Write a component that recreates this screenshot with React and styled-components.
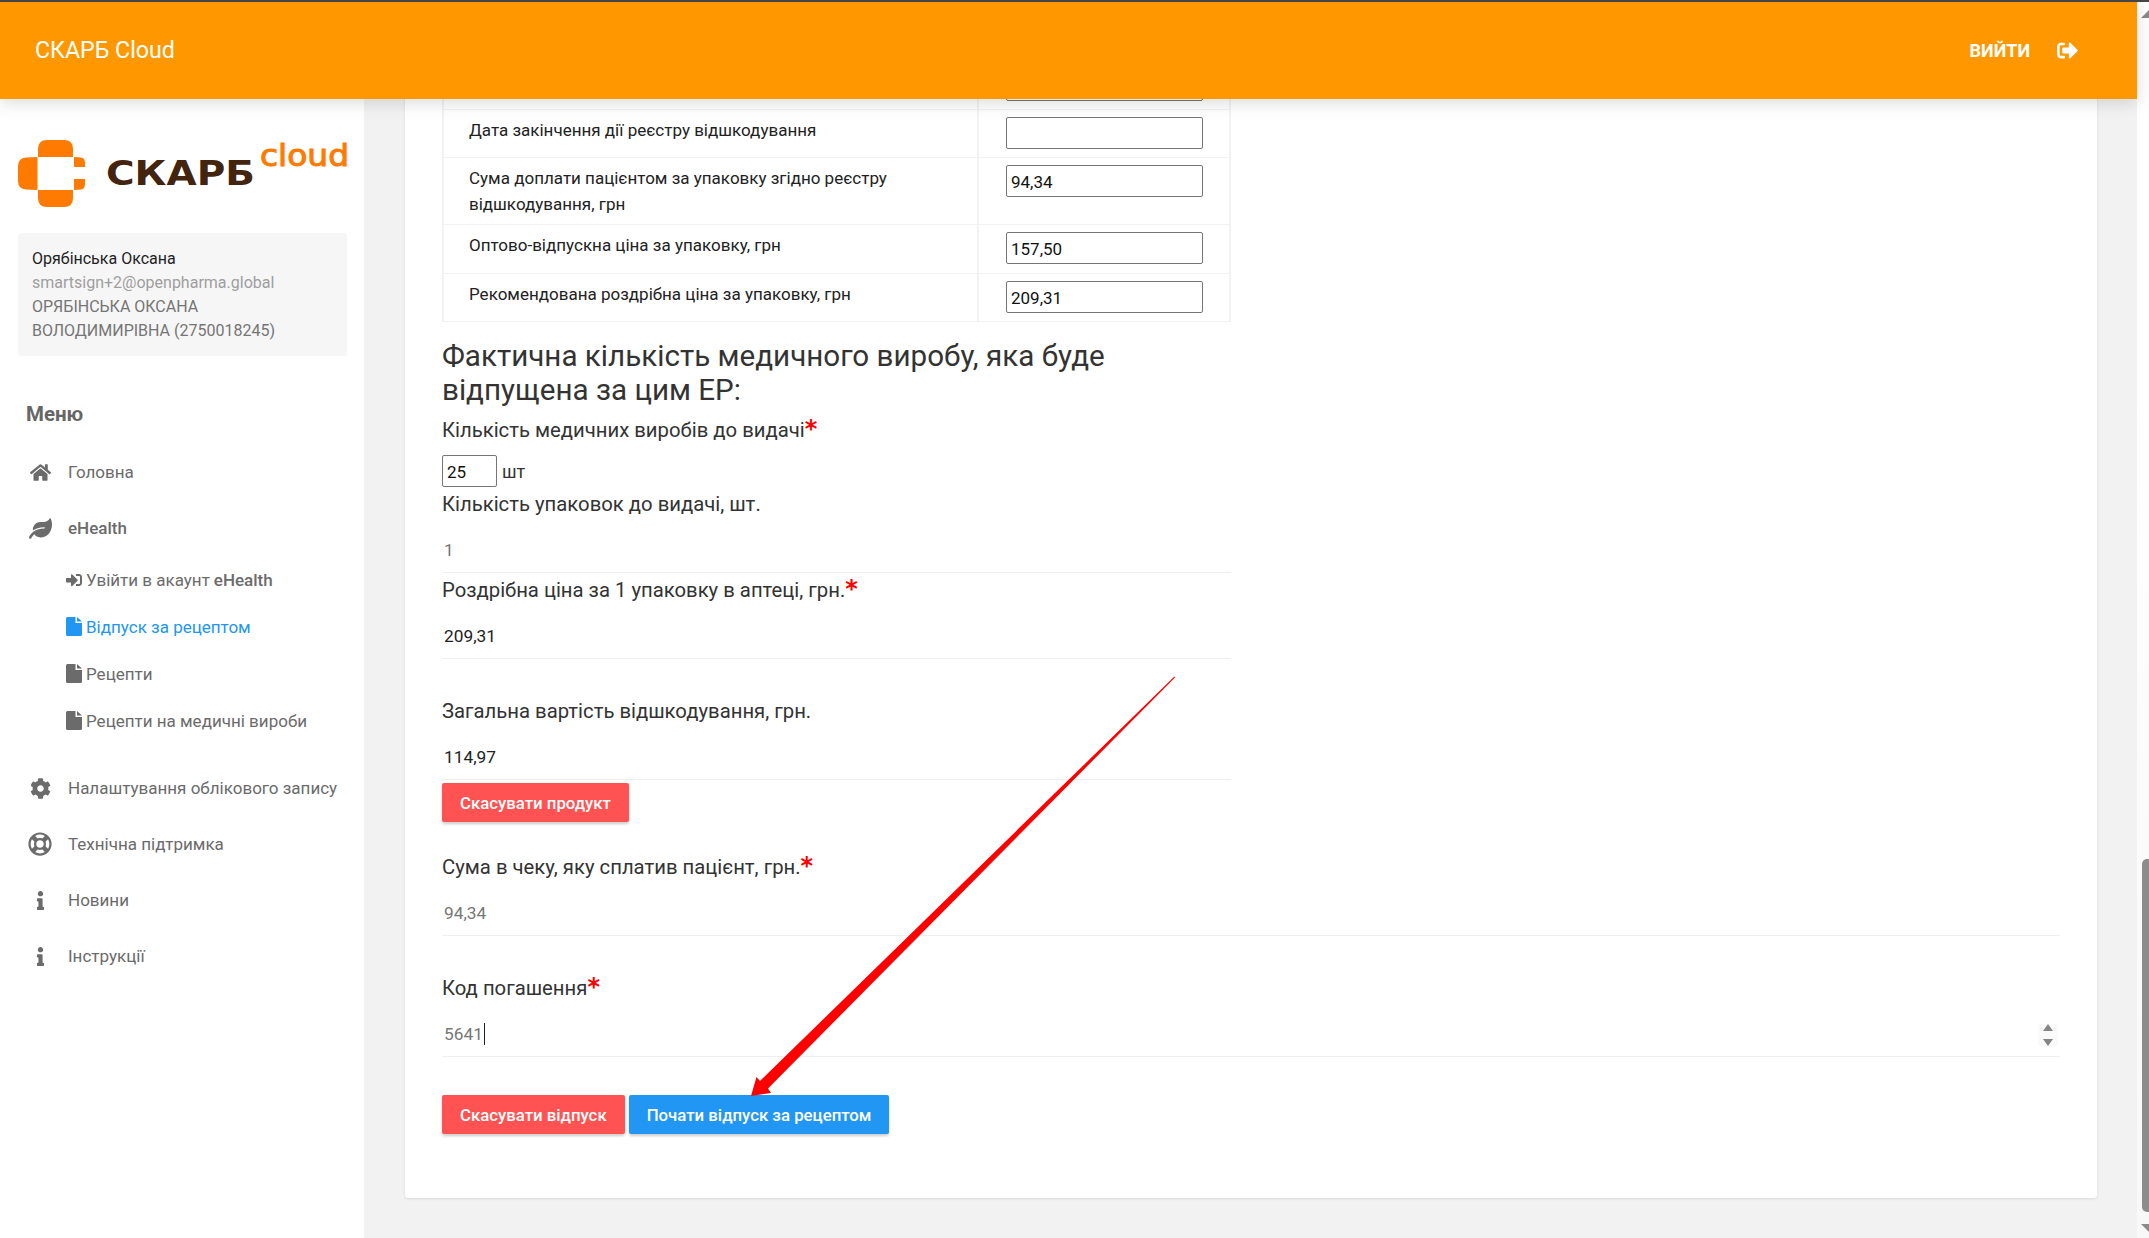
import React from 'react'
import styled, { createGlobalStyle } from 'styled-components'
import { FaHome, FaLeaf, FaCog, FaRegLifeRing, FaInfo, FaSignInAlt, FaSignOutAlt } from 'react-icons/fa'

const GlobalStyle = createGlobalStyle`
html, body {
  margin: 0;
  padding: 0;
  height: 100%;
  overflow: hidden;
  background: #f2f2f2;
  font-family: Roboto, sans-serif;
}
* {
  box-sizing: border-box;
}
`

const Page = styled.div`
position: relative;
width: 2149px;
height: 1238px;
display: flex;
flex-direction: column;
border-top: 2px solid #454545;
overflow: hidden;
`

const Viewport = styled.div`
flex: 1;
display: flex;
min-height: 0;
`

const AppColumn = styled.div`
flex: 1;
display: flex;
flex-direction: column;
min-width: 0;
`

const Header = styled.header`
position: relative;
z-index: 2;
height: 97px;
flex-shrink: 0;
display: flex;
align-items: center;
justify-content: space-between;
padding: 0 59px 0 35px;
background: #ff9800;
color: white;
box-shadow: 0 4px 16px rgba(0, 0, 0, 0.14);
`

const Brand = styled.div`
margin-top: -2px;
font-size: 23.2px;
font-weight: 400;
`

const Logout = styled.div`
display: flex;
align-items: center;
gap: 27px;
font-size: 18px;
font-weight: 700;
svg {
  font-size: 21px;
}
`

const Body = styled.div`
flex: 1;
display: flex;
min-height: 0;
`

const Sidebar = styled.aside`
width: 364px;
flex-shrink: 0;
background: white;
padding: 41px 17px 0 18px;
color: #666;
`

const LogoBox = styled.div`
height: 67px;
svg {
  display: block;
  overflow: visible;
}
`

const UserBox = styled.div`
margin-top: 26px;
height: 123px;
padding: 14px 14px;
background: #f6f6f6;
border-radius: 3px;
font-size: 16px;
line-height: 24px;
color: #757575;
`

const UserName = styled.div`
color: #222;
`

const UserEmail = styled.div`
color: #9e9e9e;
`

const MenuTitle = styled.div`
margin: 46px 0 0 8px;
font-size: 20.5px;
line-height: 24px;
font-weight: 700;
color: #666;
`

const MenuList = styled.div`
margin-top: 18px;
`

const MenuItem = styled.div`
display: flex;
align-items: center;
height: 56px;
font-size: 17px;
font-weight: ${p => (p.$bold ? 500 : 400)};
color: #6b6b6b;
`

const MenuIcon = styled.span`
width: 50px;
padding-right: 6px;
display: flex;
justify-content: center;
font-size: ${p => p.$size}px;
flex-shrink: 0;
`

const SubMenu = styled.div`
margin: 0 0 16px;
`

const SubItem = styled.div`
display: flex;
align-items: center;
gap: 4px;
height: 47px;
padding-left: 48px;
font-size: 17px;
color: ${p => (p.$active ? '#2196f3' : '#6b6b6b')};
b {
  font-weight: 500;
}
svg {
  width: 16px;
  flex-shrink: 0;
}
`

const Main = styled.main`
flex: 1;
min-width: 0;
padding: 0 40px 0 41px;
overflow: hidden;
`

const Card = styled.div`
margin-top: -38px;
height: 1137px;
padding: 0 37px;
background: white;
border-radius: 3px;
box-shadow: 0 1px 3px rgba(0, 0, 0, 0.1);
`

const Table = styled.table`
width: 789px;
border-collapse: collapse;
font-size: 17px;
line-height: 26px;
color: #222;
`

const Row = styled.tr`
height: ${p => p.$height}px;
`

const LabelCell = styled.td`
width: 539px;
padding: 7px 12px 6px 25px;
vertical-align: top;
border: 2px solid #f2f2f2;
border-top-width: 1px;
border-bottom-width: 1px;
`

const InputCell = styled.td`
padding: 7px 26px 0 27px;
vertical-align: top;
border: 2px solid #f2f2f2;
border-top-width: 1px;
border-bottom-width: 1px;
`

const BoxInput = styled.input`
display: block;
width: ${p => p.$width || 197}px;
height: 32px;
padding: 1px 4px 0;
border: 1px solid #767676;
border-radius: 2px;
background: white;
font-family: Roboto, sans-serif;
font-size: 17px;
color: #111;
outline: none;
`

const Heading = styled.h2`
margin: 17px 0 0;
width: 789px;
font-size: 29.6px;
font-weight: 400;
line-height: 34px;
color: #333;
`

const Label = styled.div`
margin-top: ${p => p.$top || 0}px;
font-size: 20.3px;
line-height: 24px;
color: #333;
`

const Required = styled.span`
color: #f00;
font-family: "DejaVu Sans", sans-serif;
font-weight: 700;
font-size: 24px;
line-height: 0;
`

const QuantityRow = styled.div`
display: flex;
align-items: center;
gap: 5px;
margin-top: 13px;
margin-bottom: 5px;
font-size: 18px;
color: #333;
`

const Value = styled.div`
position: relative;
width: ${p => (p.$narrow ? '789px' : 'auto')};
padding: 22px 2px 10px;
height: 57px;
border-bottom: 1px solid #efefef;
font-size: 17.3px;
line-height: 24px;
color: ${p => (p.$muted ? '#777' : '#222')};
`

const Caret = styled.span`
display: inline-block;
width: 1px;
height: 22px;
margin-left: 1px;
vertical-align: -5px;
background: #222;
`

const Stepper = styled.div`
position: absolute;
right: 2px;
top: 24px;
width: 20px;
height: 22px;
display: flex;
flex-direction: column;
align-items: center;
justify-content: space-between;
background: #fafafa;
`

const StepArrow = styled.span`
width: 0;
height: 0;
border-left: 5.5px solid transparent;
border-right: 5.5px solid transparent;
border-${p => (p.$down ? 'top' : 'bottom')}: 7px solid #858585;
`

const Button = styled.button`
height: 39px;
padding: 0 18px;
border: none;
border-radius: 2px;
background: ${p => (p.$primary ? '#2196f3' : '#ff5252')};
color: white;
font-family: Roboto, sans-serif;
font-size: 16.8px;
font-weight: 500;
box-shadow: 0 2px 3px rgba(0, 0, 0, 0.2);
`

const ProductButton = styled(Button)`
display: block;
margin-top: 3px;
`

const Actions = styled.div`
display: flex;
gap: 4px;
margin-top: 38px;
`

const Scrollbar = styled.div`
width: 12px;
flex-shrink: 0;
background: linear-gradient(#fff 0, #fff 400px, #f8f8f8 100%);
overflow: hidden;
display: flex;
flex-direction: column;
padding-top: 8px;
`

const ScrollArrow = styled.div`
width: 0;
height: 0;
margin-left: 4px;
flex-shrink: 0;
border-left: 8px solid transparent;
border-right: 8px solid transparent;
border-${p => (p.$down ? 'top' : 'bottom')}: 8px solid #8a8a8a;
`

const ScrollThumb = styled.div`
width: 17px;
margin: 841px 0 12px 5px;
height: 353px;
flex-shrink: 0;
border-radius: 5px;
background: #8c8c8c;
`

const Annotation = styled.svg`
position: absolute;
left: 0;
top: 0;
z-index: 1;
pointer-events: none;
`

function Logo() {
  return (
    <svg width="330" height="67" viewBox="0 0 330 67">
      <path fill="#ff7a00" d="M20 9 Q20 0 29 0 L46 0 Q55 0 55 9 L55 17 L20 17 Z" />
      <path fill="#ff7a00" d="M20 50 L55 50 L55 58 Q55 67 46 67 L29 67 Q20 67 20 58 Z" />
      <path fill="#ff7a00" d="M8 17.5 L19.5 17 L19.5 50 L8 49.5 Q0 49 0 41 L0 26 Q0 18 8 17.5 Z" />
      <path fill="#ff7a00" d="M56 17 L63 17.5 Q67 18 67 23 L67 27 L56 27 Q56 22 56 17 Z" />
      <path fill="#ff7a00" d="M56 39 L67 39 L67 44 Q67 49 63 49.5 L56 50 Z" />
      <text x="88" y="45" fontFamily="DejaVu Sans" fontWeight="700" fontSize="33" fill="#42240f" textLength="149" lengthAdjust="spacingAndGlyphs">СКАРБ</text>
      <text x="242" y="26" fontFamily="DejaVu Sans" fontWeight="400" fontSize="30" fill="#ff7a00" stroke="#ff7a00" strokeWidth="1" textLength="89" lengthAdjust="spacingAndGlyphs">cloud</text>
    </svg>
  )
}

function FileIcon() {
  return (
    <svg height="19" viewBox="0 0 16 19">
      <path fill="currentColor" d="M0 1.5Q0 0 1.5 0H9.5V6H16V17.5Q16 19 14.5 19H1.5Q0 19 0 17.5Z" />
      <path fill="currentColor" d="M11 0 L16 4.5 H11Z" />
    </svg>
  )
}

function App() {
  return (
    <Page>
      <GlobalStyle />
      <Viewport>
        <AppColumn>
          <Header>
            <Brand>СКАРБ Cloud</Brand>
            <Logout>ВИЙТИ <FaSignOutAlt /></Logout>
          </Header>
          <Body>
            <Sidebar>
              <LogoBox><Logo /></LogoBox>
              <UserBox>
                <UserName>Орябінська Оксана</UserName>
                <UserEmail>smartsign+2@openpharma.global</UserEmail>
                ОРЯБІНСЬКА ОКСАНА<br />
                ВОЛОДИМИРІВНА (2750018245)
              </UserBox>
              <MenuTitle>Меню</MenuTitle>
              <MenuList>
                <MenuItem><MenuIcon $size={21}><FaHome /></MenuIcon>Головна</MenuItem>
                <MenuItem $bold><MenuIcon $size={23}><FaLeaf /></MenuIcon>eHealth</MenuItem>
                <SubMenu>
                  <SubItem><FaSignInAlt size={16} />Увійти в акаунт <b>eHealth</b></SubItem>
                  <SubItem $active><FileIcon />Відпуск за рецептом</SubItem>
                  <SubItem><FileIcon />Рецепти</SubItem>
                  <SubItem><FileIcon />Рецепти на медичні вироби</SubItem>
                </SubMenu>
                <MenuItem><MenuIcon $size={21}><FaCog /></MenuIcon>Налаштування облікового запису</MenuItem>
                <MenuItem><MenuIcon $size={24}><FaRegLifeRing /></MenuIcon>Технічна підтримка</MenuItem>
                <MenuItem><MenuIcon $size={19}><FaInfo /></MenuIcon>Новини</MenuItem>
                <MenuItem><MenuIcon $size={19}><FaInfo /></MenuIcon>Інструкції</MenuItem>
              </MenuList>
            </Sidebar>
            <Main>
              <Card>
                <Table>
                  <tbody>
                    <Row $height={48}>
                      <LabelCell />
                      <InputCell><BoxInput readOnly /></InputCell>
                    </Row>
                    <Row $height={48}>
                      <LabelCell>Дата закінчення дії реєстру відшкодування</LabelCell>
                      <InputCell><BoxInput readOnly /></InputCell>
                    </Row>
                    <Row $height={67}>
                      <LabelCell>Сума доплати пацієнтом за упаковку згідно реєстру відшкодування, грн</LabelCell>
                      <InputCell><BoxInput readOnly value="94,34" /></InputCell>
                    </Row>
                    <Row $height={49}>
                      <LabelCell>Оптово-відпускна ціна за упаковку, грн</LabelCell>
                      <InputCell><BoxInput readOnly value="157,50" /></InputCell>
                    </Row>
                    <Row $height={48}>
                      <LabelCell>Рекомендована роздрібна ціна за упаковку, грн</LabelCell>
                      <InputCell><BoxInput readOnly value="209,31" /></InputCell>
                    </Row>
                  </tbody>
                </Table>
                <Heading>Фактична кількість медичного виробу, яка буде відпущена за цим ЕР:</Heading>
                <Label $top={11}>Кількість медичних виробів до видачі<Required>*</Required></Label>
                <QuantityRow><BoxInput readOnly value="25" $width={55} />шт</QuantityRow>
                <Label>Кількість упаковок до видачі, шт.</Label>
                <Value $narrow $muted>1</Value>
                <Label $top={5}>Роздрібна ціна за 1 упаковку в аптеці, грн.<Required>*</Required></Label>
                <Value $narrow>209,31</Value>
                <Label $top={40}>Загальна вартість відшкодування, грн.</Label>
                <Value $narrow>114,97</Value>
                <ProductButton>Скасувати продукт</ProductButton>
                <Label $top={33}>Сума в чеку, яку сплатив пацієнт, грн.<Required>*</Required></Label>
                <Value $muted>94,34</Value>
                <Label $top={40}>Код погашення<Required>*</Required></Label>
                <Value $muted>
                  5641<Caret />
                  <Stepper><StepArrow /><StepArrow $down /></Stepper>
                </Value>
                <Actions>
                  <Button>Скасувати відпуск</Button>
                  <Button $primary>Почати відпуск за рецептом</Button>
                </Actions>
              </Card>
            </Main>
          </Body>
        </AppColumn>
        <Scrollbar>
          <ScrollArrow />
          <ScrollThumb />
          <ScrollArrow $down />
        </Scrollbar>
      </Viewport>
      {/* red arrow someone drew on top of the screenshot */}
      <Annotation width="2149" height="1238" viewBox="0 0 2149 1238">
        <path fill="#f00" d="M1174.4 674.5 L1175.2 675.3 L768 1086.5 L771 1091 L751 1094 L756.5 1075 L760 1079 Z" />
      </Annotation>
    </Page>
  )
}

export default App
